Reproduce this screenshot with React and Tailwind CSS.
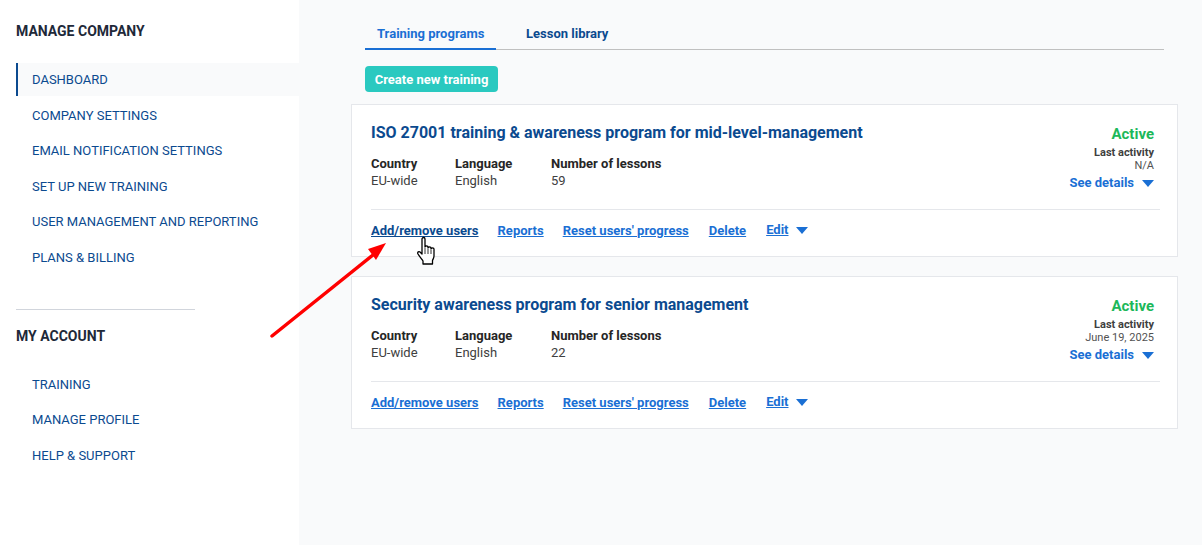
import React from 'react';

const companyLinks = ['COMPANY SETTINGS', 'EMAIL NOTIFICATION SETTINGS', 'SET UP NEW TRAINING', 'USER MANAGEMENT AND REPORTING', 'PLANS & BILLING'];
const accountLinks = ['TRAINING', 'MANAGE PROFILE', 'HELP & SUPPORT'];

const programs = [
  { title: 'ISO 27001 training & awareness program for mid-level-management', lessons: '59', activity: 'N/A', hovered: true },
  { title: 'Security awareness program for senior management', lessons: '22', activity: 'June 19, 2025' },
];

const Caret = ({ className }) => (
  <svg viewBox="0 0 12 7" className={className} fill="currentColor">
    <path d="M0 0h12L6 7z" />
  </svg>
);

const Meta = ({ label, value }) => (
  <div>
    <div className="text-[13px] leading-[17px] font-bold text-neutral-800">{label}</div>
    <div className="text-[13px] leading-[17px] text-neutral-700">{value}</div>
  </div>
);

const ProgramCard = ({ program }) => (
  <div className="bg-white border border-gray-200 pl-[19px] pr-[17px] h-[153px]">
    <div className="flex justify-between h-[105px] border-b border-gray-200">
      <div className="pt-[17px]">
        <h3 className="text-base leading-[22px] font-bold text-[#0b4a8f]">{program.title}</h3>
        <div className="flex mt-[11px]">
          <div className="w-[84px]"><Meta label="Country" value="EU-wide" /></div>
          <div className="w-[96px]"><Meta label="Language" value="English" /></div>
          <Meta label="Number of lessons" value={program.lessons} />
        </div>
      </div>
      <div className="flex flex-col items-end pt-5 pr-1.5">
        <div className="text-[15px] leading-[18px] font-bold text-[#1cb85a]">Active</div>
        <div className="text-[11px] leading-[13px] font-bold text-neutral-700 mt-[3px]">Last activity</div>
        <div className="text-[11px] leading-[13px] text-neutral-600">{program.activity}</div>
        <div className="flex items-center gap-2 mt-0.5 text-[#1a6fd4]">
          <span className="text-[13px] leading-[18px] font-bold">See details</span>
          <Caret className="w-3 h-[7px]" />
        </div>
      </div>
    </div>
    <div className="flex items-center gap-[19px] h-[39px] pt-0.5 text-[13px] font-bold text-[#1a6fd4]">
      <a className={program.hovered ? 'underline text-[#0b4a8f]' : 'underline'}>Add/remove users</a>
      <a className="underline">Reports</a>
      <a className="underline">Reset users' progress</a>
      <a className="underline ml-px">Delete</a>
      <div className="flex items-center gap-[7px] ml-px">
        <a className="underline -mt-0.5">Edit</a>
        <Caret className="w-3 h-[7px]" />
      </div>
    </div>
  </div>
);

export default function App() {
  return (
    <div className="relative flex h-[545px] overflow-hidden bg-gray-50 font-['Roboto',sans-serif]">
      <aside className="w-[299px] shrink-0 bg-white pt-[23px] pl-4">
        <h2 className="text-sm leading-4 font-bold text-gray-800">MANAGE COMPANY</h2>
        <nav className="mt-6 text-[13px] text-[#0b4a8f]">
          <div className="flex items-center h-[33px] pl-[14px] border-l-2 border-[#0b4a8f] bg-gray-50">DASHBOARD</div>
          <div className="flex flex-col pt-[1.5px]">
            {companyLinks.map((link) => (
              <div key={link} className="flex items-center h-[35.5px] pl-4">{link}</div>
            ))}
          </div>
        </nav>
        <div className="w-[179px] border-t border-gray-300 mt-[33.5px]" />
        <h2 className="text-sm leading-4 font-bold text-gray-800 mt-[18px]">MY ACCOUNT</h2>
        <nav className="mt-[23px] text-[13px] text-[#0b4a8f]">
          {accountLinks.map((link) => (
            <div key={link} className="flex items-center h-[35.5px] pl-4">{link}</div>
          ))}
        </nav>
      </aside>

      <main className="flex-1 pl-[52px] pr-6 pt-4">
        <div className="mx-3.5 flex border-b border-[#c0c0c0] h-[34px] text-[13px] font-bold">
          <div className="w-[131px] h-[34px] pl-3 pt-2 text-[#1a6fd4] border-b-2 border-[#1a6fd4]">Training programs</div>
          <div className="pl-[30px] pt-2 text-[#0b4a8f]">Lesson library</div>
        </div>
        <button className="block ml-3.5 mt-4 w-[133px] h-[26px] pt-0.5 rounded-sm bg-[#2ac9c0] text-[13px] font-bold text-white">Create new training</button>
        <div className="flex flex-col gap-[19px] mt-3">
          {programs.map((p) => <ProgramCard key={p.title} program={p} />)}
        </div>
      </main>

      {/* annotation arrow */}
      <svg className="absolute left-[265px] top-[240px] w-[130px] h-[105px]" viewBox="0 0 130 105">
        <path d="M7 96 L108 15" stroke="#f00" strokeWidth="3.5" strokeLinecap="round" />
        <path d="M121 3 L103 9 L111 20 z" fill="#f00" />
      </svg>

      {/* hand cursor */}
      <svg className="absolute left-[415px] top-[236px] w-[24px] h-[31px]" viewBox="0 0 24 31">
        <path
          d="M7 3c0-2 3-2 3 0v8c0-1.500 3-1.500 3 0v1c0-1.500 3-1.500 3 0v1c0-1.500 3-1.500 3 0v7c0 2-1 3-1.500 4.500V28H8v-3c-1-2-3-3.500-5-7-1-2 1-3 2-2l2 2z"
          fill="#fff"
          stroke="#000"
          strokeWidth="1.300"
          strokeLinejoin="round"
        />
        <path d="M10 12v6M13 13v5M16 14v4" stroke="#000" strokeWidth="0.8" />
      </svg>
    </div>
  );
}
